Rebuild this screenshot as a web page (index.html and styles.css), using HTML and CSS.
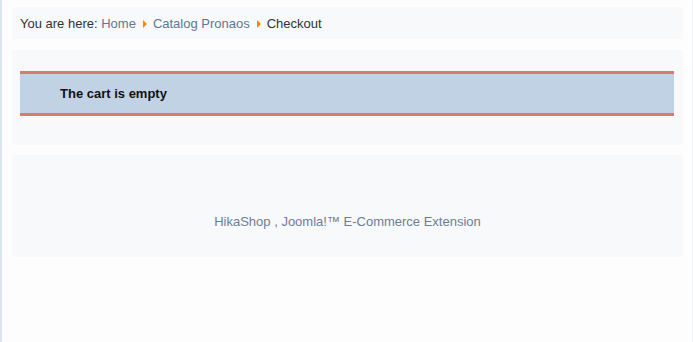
FILE: index.html
```html
<!doctype html>
<html lang="en">
<head>
    <meta charset="UTF-8">
    <meta name="viewport" content="width=device-width, initial-scale=1.0">
    <title>Checkout</title>
    <link rel="stylesheet" href="styles.css">
</head>
<body>
    <div class="page">
        <div class="panel breadcrumbs">
            <span class="here">You are here: </span>
            <a href="#" class="crumb">Home</a>
            <span class="sep"></span>
            <a href="#" class="crumb">Catalog Pronaos</a>
            <span class="sep"></span>
            <span class="current">Checkout</span>
        </div>

        <div class="panel content">
            <div class="message">The cart is empty</div>
        </div>

        <div class="panel footer">
            HikaShop , Joomla!&trade; E-Commerce Extension
        </div>
    </div>
</body>
</html>
```

FILE: styles.css
```css
html, body {
    height: 100%;
}

body {
    margin: 0;
    font-family: "Liberation Sans", Arial, sans-serif;
    font-size: 13px;
    color: #333333;
    background-color: #fdfdfd;
    border-left: 2px solid #dce5ee;
    border-right: 1px solid #f0f2f4;
    box-sizing: border-box;
}

.page {
    padding: 7px 9px 0 10px;
    display: flex;
    flex-direction: column;
    gap: 11px;
}

.panel {
    background-color: #f8f9fb;
}

.breadcrumbs {
    padding: 9px 8px 7px;
    line-height: 16px;
    display: flex;
    align-items: center;
    white-space: pre;
}

.crumb {
    color: #5d7891;
    text-decoration: none;
}

.current {
    color: #333333;
}

.sep {
    width: 0;
    height: 0;
    border-top: 4px solid transparent;
    border-bottom: 4px solid transparent;
    border-left: 4px solid #f28a00;
    margin: 0 6px 0 7px;
}

.content {
    padding: 21px 9px 29px 8px;
}

.message {
    background-color: #c2d2e5;
    border-top: 3px solid #dc7878;
    border-bottom: 3px solid #dc7878;
    padding: 12px 40px 11px;
    line-height: 16px;
    font-weight: bold;
    color: #111111;
}

.content + .footer {
    margin-top: -1px;
}

.footer {
    height: 102px;
    box-sizing: border-box;
    padding-top: 59px;
    text-align: center;
    line-height: 16px;
    color: #6b8096;
}
```
